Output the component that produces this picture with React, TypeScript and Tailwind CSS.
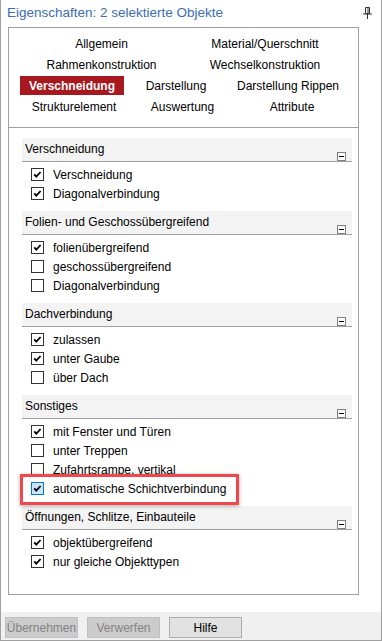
import React from 'react';

type Item = { label: string; checked: boolean; hot?: boolean };
type Section = { title: string; items: Item[] };

const sections: Section[] = [
  {
    title: 'Verschneidung',
    items: [
      { label: 'Verschneidung', checked: true },
      { label: 'Diagonalverbindung', checked: true },
    ],
  },
  {
    title: 'Folien- und Geschossübergreifend',
    items: [
      { label: 'folienübergreifend', checked: true },
      { label: 'geschossübergreifend', checked: false },
      { label: 'Diagonalverbindung', checked: false },
    ],
  },
  {
    title: 'Dachverbindung',
    items: [
      { label: 'zulassen', checked: true },
      { label: 'unter Gaube', checked: true },
      { label: 'über Dach', checked: false },
    ],
  },
  {
    title: 'Sonstiges',
    items: [
      { label: 'mit Fenster und Türen', checked: true },
      { label: 'unter Treppen', checked: false },
      { label: 'Zufahrtsrampe, vertikal', checked: false },
      { label: 'automatische Schichtverbindung', checked: true, hot: true },
    ],
  },
  {
    title: 'Öffnungen, Schlitze, Einbauteile',
    items: [
      { label: 'objektübergreifend', checked: true },
      { label: 'nur gleiche Objekttypen', checked: true },
    ],
  },
];

// tab rows: [label, cell width]
const tabRows: [string, number][][] = [
  [['Allgemein', 163], ['Material/Querschnitt', 164]],
  [['Rahmenkonstruktion', 163], ['Wechselkonstruktion', 164]],
  [['Verschneidung', 104], ['Darstellung', 104], ['Darstellung Rippen', 120]],
  [['Strukturelement', 108], ['Auswertung', 109], ['Attribute', 110]],
];

function CheckBox({ checked, hot }: { checked: boolean; hot?: boolean }) {
  return (
    <span
      className={
        'flex h-[13px] w-[13px] shrink-0 items-center justify-center border ' +
        (hot ? 'border-[#0078d7] bg-[#cce4f7]' : 'border-[#333333] bg-white')
      }
    >
      {checked && (
        <svg width="11" height="11" viewBox="0 0 11 11">
          <path d="M2.2 5.4 L4.3 7.6 L8.6 3" fill="none" stroke="#000" strokeWidth="1.8" />
        </svg>
      )}
    </span>
  );
}

function Pin() {
  return (
    <svg width="9" height="12" viewBox="0 0 9 12">
      <path d="M2.5 0.5 H6.5 V6.5 H2.5 Z" fill="none" stroke="#333" strokeWidth="1" />
      <path d="M5 1 V6" stroke="#333" strokeWidth="1" />
      <path d="M0 7 H9" stroke="#333" strokeWidth="1" />
      <path d="M4.5 7 V12" stroke="#333" strokeWidth="1" />
    </svg>
  );
}

export default function App() {
  return (
    <div
      className="relative flex h-[641px] w-[382px] flex-col border-x border-b border-[#a0a0a0] bg-white text-[12px] text-black"
      style={{ fontFamily: '"Segoe UI", "Liberation Sans", Arial, sans-serif' }}
    >
      {/* title */}
      <div className="flex h-[27px] items-center justify-between pl-[6px] pr-[9px]">
        <span className="text-[13.5px] text-[#3b6cb5]">Eigenschaften: 2 selektierte Objekte</span>
        <span className="mb-[2px]">
          <Pin />
        </span>
      </div>

      {/* property box */}
      <div className="ml-[7px] flex h-[568px] w-[351px] flex-col border border-[#a0a0a0]">
        <div className="border-b border-[#a0a0a0] pb-[10px] pl-[11px] pt-[5px]">
          {tabRows.map((row, i) => (
            <div key={i} className="flex h-[21px] items-center">
              {row.map(([label, w]) => (
                <div key={label} className="flex justify-center" style={{ width: w }}>
                  {label === 'Verschneidung' ? (
                    <span className="flex h-[19px] w-full items-center justify-center bg-[#a8181f] font-bold text-white">
                      {label}
                    </span>
                  ) : (
                    <span>{label}</span>
                  )}
                </div>
              ))}
            </div>
          ))}
        </div>

        <div className="flex flex-col pl-[13px] pr-[6px] pt-[10px]">
          {sections.map((s) => (
            <div key={s.title} className="pb-[8px]">
              <div className="flex h-[24px] items-center justify-between border-b border-[#a0a0a0] bg-[#f3f3f3] pl-[3px] pr-[6px]">
                <span className="-mt-[1px]">{s.title}</span>
                <span className="mt-[13px] flex h-[9px] w-[9px] items-center justify-center border border-[#808080] bg-white">
                  <span className="h-[1px] w-[5px] bg-black" />
                </span>
              </div>
              <div className="pt-[3px]">
                {s.items.map((it) => (
                  <div key={it.label} className="flex h-[19px] items-center pl-[9px]">
                    <CheckBox checked={it.checked} hot={it.hot} />
                    <span className="ml-[9px]">{it.label}</span>
                  </div>
                ))}
              </div>
            </div>
          ))}
        </div>
      </div>

      {/* button bar */}
      <div className="mt-auto flex h-[28px] gap-[9px] bg-[#f0f0f0] pl-[4px] pt-[5px]">
        <button className="h-[21px] w-[73px] border border-[#bfbfbf] bg-[#cccccc] text-[12px] text-[#838383]">
          Übernehmen
        </button>
        <button className="h-[21px] w-[73px] border border-[#bfbfbf] bg-[#cccccc] text-[12px] text-[#838383]">
          Verwerfen
        </button>
        <button className="h-[21px] w-[73px] border border-[#adadad] bg-[#e1e1e1] text-[12px] text-black">
          Hilfe
        </button>
      </div>

      {/* highlight marker */}
      <div className="pointer-events-none absolute left-[19px] top-[474px] h-[31px] w-[219px] border-[3px] border-[#f0474d] shadow-[0_1px_4px_rgba(0,0,0,0.35)]" />
    </div>
  );
}
